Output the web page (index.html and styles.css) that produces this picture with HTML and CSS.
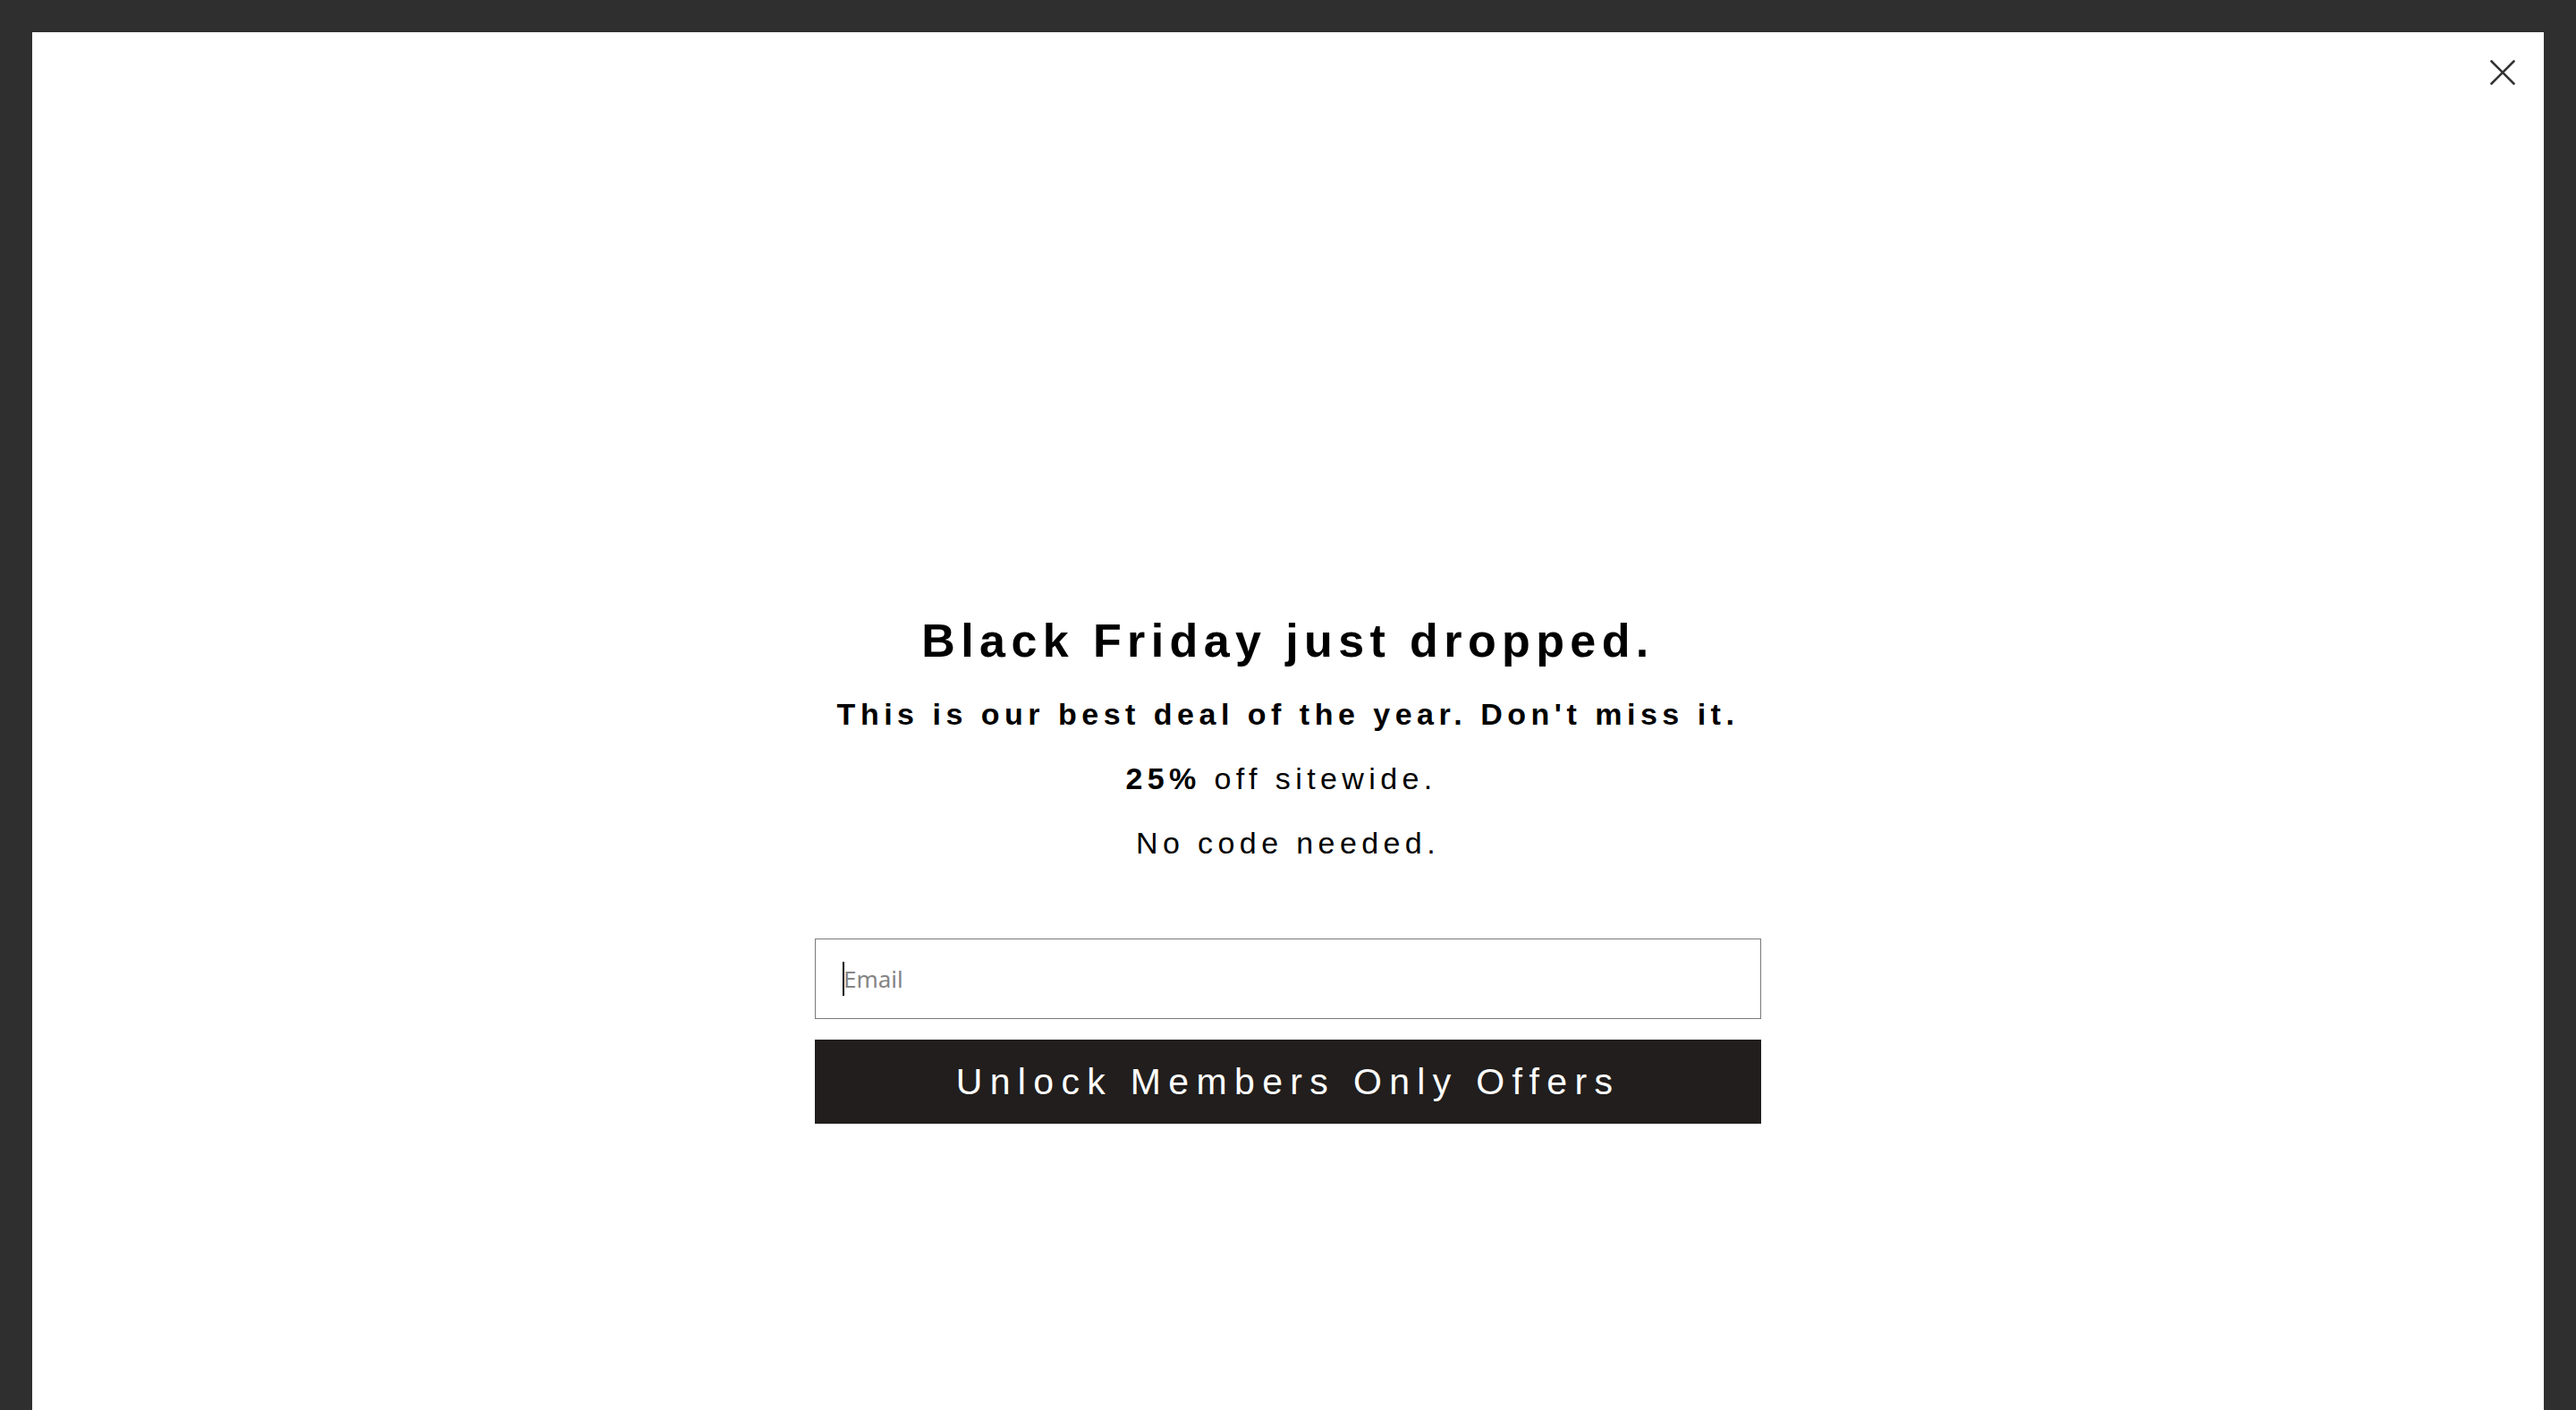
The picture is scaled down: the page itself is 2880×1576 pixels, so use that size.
FILE: index.html
```html
<!DOCTYPE html>
<html lang="en">
<head>
<meta charset="utf-8">
<title>Black Friday just dropped.</title>
<link rel="stylesheet" href="styles.css">
</head>
<body>
  <div class="overlay">
    <div class="modal">
      <button class="close" type="button" aria-label="Close">
        <svg viewBox="0 0 28 28" width="28" height="28" aria-hidden="true">
          <path d="M1.5 1.5 L26.5 26.5 M26.5 1.5 L1.5 26.5" />
        </svg>
      </button>
      <div class="content">
        <h1 class="title">Black Friday just dropped.</h1>
        <p class="sub">This is our best deal of the year. Don't miss it.</p>
        <p class="line"><strong>25%</strong> off sitewide.&nbsp;</p>
        <p class="line">No code needed.</p>
        <form class="form">
          <input class="email" type="email" placeholder="Email" autofocus>
          <button class="submit" type="button">Unlock Members Only Offers</button>
        </form>
      </div>
    </div>
  </div>
</body>
</html>
```

FILE: styles.css
```css
html, body {
  margin: 0;
  padding: 0;
  height: 100%;
  overflow: hidden;
  background: #2f2f2f;
  font-family: "Liberation Sans", Arial, sans-serif;
  color: #000;
}

.overlay {
  height: 100%;
  padding: 36px 36px 0;
  box-sizing: border-box;
}

.modal {
  position: relative;
  background: #fff;
  height: 100%;
  box-sizing: border-box;
}

.close {
  position: absolute;
  top: 31px;
  right: 32px;
  width: 28px;
  height: 28px;
  padding: 0;
  margin: 0;
  border: 0;
  background: transparent;
  cursor: pointer;
  display: block;
}

.close svg {
  display: block;
}

.close path {
  fill: none;
  stroke: #333;
  stroke-width: 2.6;
  stroke-linecap: round;
}

.content {
  display: flex;
  flex-direction: column;
  align-items: center;
  padding-top: 648px;
  gap: 28px;
  text-align: center;
}

.title {
  margin: 0;
  font-size: 52px;
  line-height: 64px;
  font-weight: 700;
  letter-spacing: 6.4px;
}

.sub,
.line {
  margin: 0;
  font-size: 34px;
  line-height: 44px;
  letter-spacing: 5.4px;
}

.sub {
  font-weight: 700;
  letter-spacing: 5.5px;
}

.line {
  font-weight: 400;
}

.line strong {
  font-weight: 700;
}

.form {
  display: flex;
  flex-direction: column;
  gap: 23px;
  width: 1058px;
  margin-top: 57px;
}

.email {
  display: block;
  width: 100%;
  height: 90px;
  box-sizing: border-box;
  margin: 0;
  border: 1px solid #7a7a7a;
  border-radius: 0;
  padding: 0 0 0 31px;
  font-family: "Noto Sans", "Open Sans", sans-serif;
  font-size: 26px;
  color: #000;
  caret-color: #000;
  background: #fff linear-gradient(#000, #000) no-repeat 30px center / 2px 38px;
  outline: none;
}

.email::placeholder {
  color: #858585;
  opacity: 1;
}

.submit {
  display: block;
  width: 100%;
  height: 94px;
  margin: 0;
  border: 0;
  border-radius: 0;
  background: #211e1d;
  color: #fff;
  font-family: "Liberation Sans", Arial, sans-serif;
  font-size: 41px;
  font-weight: 400;
  letter-spacing: 8.35px;
  padding: 0;
  cursor: pointer;
}
```
